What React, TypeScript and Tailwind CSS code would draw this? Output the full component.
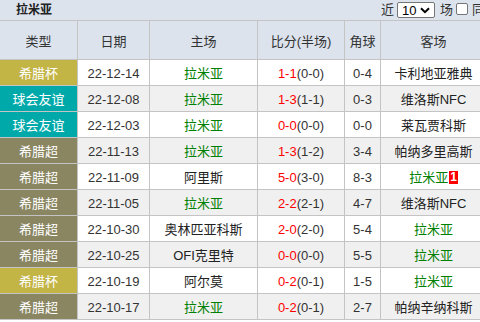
import React from "react";

type Row = {
  type: string;
  tc: string;
  date: string;
  home: string;
  homeG?: boolean;
  ft: string;
  ht: string;
  corner: string;
  away: string;
  awayG?: boolean;
  badge?: string;
};

const GOLD = "bg-[#c3b446]";
const TEAL = "bg-[#00a9a9]";
const OLIVE = "bg-[#8a8662]";

const rows: Row[] = [
  { type: "希腊杯", tc: GOLD, date: "22-12-14", home: "拉米亚", homeG: true, ft: "1-1", ht: "(0-0)", corner: "0-4", away: "卡利地亚雅典" },
  { type: "球会友谊", tc: TEAL, date: "22-12-08", home: "拉米亚", homeG: true, ft: "1-3", ht: "(1-1)", corner: "0-3", away: "维洛斯NFC" },
  { type: "球会友谊", tc: TEAL, date: "22-12-03", home: "拉米亚", homeG: true, ft: "0-0", ht: "(0-0)", corner: "0-0", away: "莱瓦贾科斯" },
  { type: "希腊超", tc: OLIVE, date: "22-11-13", home: "拉米亚", homeG: true, ft: "1-3", ht: "(1-2)", corner: "3-4", away: "帕纳多里高斯" },
  { type: "希腊超", tc: OLIVE, date: "22-11-09", home: "阿里斯", ft: "5-0", ht: "(3-0)", corner: "8-3", away: "拉米亚", awayG: true, badge: "1" },
  { type: "希腊超", tc: OLIVE, date: "22-11-05", home: "拉米亚", homeG: true, ft: "2-2", ht: "(2-1)", corner: "4-7", away: "维洛斯NFC" },
  { type: "希腊超", tc: OLIVE, date: "22-10-30", home: "奥林匹亚科斯", ft: "2-0", ht: "(2-0)", corner: "5-4", away: "拉米亚", awayG: true },
  { type: "希腊超", tc: OLIVE, date: "22-10-25", home: "OFI克里特", ft: "0-0", ht: "(0-0)", corner: "5-5", away: "拉米亚", awayG: true },
  { type: "希腊杯", tc: GOLD, date: "22-10-19", home: "阿尔莫", ft: "0-2", ht: "(0-1)", corner: "1-5", away: "拉米亚", awayG: true },
  { type: "希腊超", tc: OLIVE, date: "22-10-17", home: "拉米亚", homeG: true, ft: "0-2", ht: "(0-1)", corner: "2-7", away: "帕纳辛纳科斯" },
];

const cell = "flex items-center justify-center border-r border-[#c4c4c4] shrink-0";

export default function App() {
  return (
    <div
      className="w-[480px] h-[322px] overflow-hidden bg-white text-[12px] text-[#333]"
      style={{ fontFamily: '"Liberation Sans", "Noto Sans CJK SC", sans-serif' }}
    >
      <div className="w-[486px]">
        {/* top bar */}
        <div className="h-[21px] bg-[#dce3ed] border-b border-[#c4c4c4] flex items-center pl-[16px]">
          <span className="font-bold text-[#222]">拉米亚</span>
          <div className="ml-auto flex items-center h-full text-[13px] text-[#333] whitespace-nowrap">
            <span className="w-[13px]">近</span>
            <div className="ml-[3px] w-[38px] h-[16px] border border-[#767676] rounded-[2px] bg-white flex items-center pl-[4px] pr-[4px] text-[#000] text-[13px]">
              <span className="leading-none">10</span>
              <svg className="ml-auto" width="10" height="7" viewBox="0 0 10 7">
                <path d="M1 1.2 L5 5.2 L9 1.2" fill="none" stroke="#000" strokeWidth="2" />
              </svg>
            </div>
            <span className="ml-[5px] w-[13px]">场</span>
            <div className="ml-[3px] w-[12px] h-[12px] mb-[2px] border border-[#767676] rounded-[2px] bg-white" />
            <span className="ml-[4px] w-[14px]">同</span>
          </div>
        </div>
        {/* header */}
        <div className="flex h-[39px] bg-[#dce3ed] border-b border-[#c4c4c4] text-[13px] text-[#333]">
          <div className={`${cell} w-[78px] pt-[3px]`}>类型</div>
          <div className={`${cell} w-[72px] pt-[3px]`}>日期</div>
          <div className={`${cell} w-[108px] pt-[3px]`}>主场</div>
          <div className={`${cell} w-[87px] pt-[3px]`}>比分(半场)</div>
          <div className={`${cell} w-[36px] pt-[3px]`}>角球</div>
          <div className={`${cell} w-[105px] border-r-0 pt-[3px]`}>客场</div>
        </div>
        {rows.map((r, i) => (
          <div
            key={i}
            className={`flex h-[26px] border-b border-[#c4c4c4] ${i % 2 === 1 ? "bg-[#f0f0f0]" : "bg-white"}`}
          >
            <div className={`${cell} w-[78px] ${r.tc} text-white text-[13px] pt-[2px]`}>{r.type}</div>
            <div className={`${cell} w-[72px] text-[13px] pt-[2px]`}>{r.date}</div>
            <div className={`${cell} w-[108px] pt-[2px] text-[13px] ${r.homeG ? "text-[#008000]" : "text-[#222]"}`}>{r.home}</div>
            <div className={`${cell} w-[87px] pt-[2px] text-[13px]`}>
              <span className="text-[#ff0000]">{r.ft}</span>
              <span>{r.ht}</span>
            </div>
            <div className={`${cell} w-[36px] pt-[2px] text-[13px]`}>{r.corner}</div>
            <div className={`${cell} w-[105px] border-r-0 pt-[2px] text-[13px] ${r.awayG ? "text-[#008000]" : "text-[#222]"}`}>
              <span>{r.away}</span>
              {r.badge && (
                <span className="bg-[#ff0000] text-white font-bold text-[12px] leading-[13px] px-[1px] ml-[1px]">{r.badge}</span>
              )}
            </div>
          </div>
        ))}
      </div>
    </div>
  );
}
